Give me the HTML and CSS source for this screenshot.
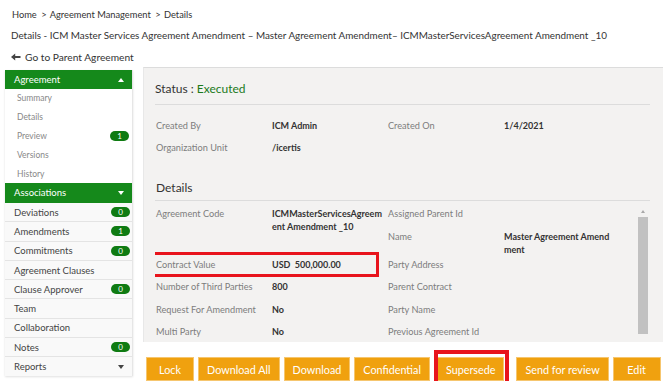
FILE: index.html
```html
<!DOCTYPE html>
<html lang="en">
<head>
    <meta charset="UTF-8">
    <meta name="viewport" content="width=device-width, initial-scale=1.0">
    <title>Agreement Details</title>
    <link rel="stylesheet" href="styles.css">
</head>
<body>

    <div class="breadcrumb">Home <span class="sep">&gt;</span> Agreement Management <span class="sep">&gt;</span> Details</div>
    <h1 class="page-title">Details - ICM Master Services Agreement Amendment – Master Agreement Amendment– ICMMasterServicesAgreement Amendment _10</h1>
    <a class="back-link" href="#">
        <svg width="10" height="8" viewBox="0 0 10 8"><path d="M0 4 L4.2 0.4 L4.2 3 L9.5 3 L9.5 5 L4.2 5 L4.2 7.6 Z" fill="#444"/></svg>
        Go to Parent Agreement
    </a>

    <div class="layout">
        <aside class="sidenav">
            <div class="nav-head">Agreement <span class="caret caret-up"></span></div>
            <ul class="nav-sub">
                <li>Summary</li>
                <li>Details</li>
                <li>Preview <span class="badge">1</span></li>
                <li>Versions</li>
                <li>History</li>
            </ul>
            <div class="nav-head">Associations <span class="caret caret-down"></span></div>
            <ul class="nav-list">
                <li>Deviations <span class="badge">0</span></li>
                <li>Amendments <span class="badge">1</span></li>
                <li>Commitments <span class="badge">0</span></li>
                <li>Agreement Clauses</li>
                <li>Clause Approver <span class="badge">0</span></li>
                <li>Team</li>
                <li>Collaboration</li>
                <li>Notes <span class="badge">0</span></li>
                <li>Reports <span class="caret caret-down dark"></span></li>
            </ul>
        </aside>

        <main class="content">
            <section class="panel">
                <div class="status">Status : <span class="status-value">Executed</span></div>

                <div class="meta-grid">
                    <span class="label">Created By</span>
                    <span class="value">ICM Admin</span>
                    <span class="label">Created On</span>
                    <span class="value">1/4/2021</span>
                    <span class="label">Organization Unit</span>
                    <span class="value">/icertis</span>
                </div>

                <h2 class="section-title">Details</h2>

                <div class="details-body">
                    <div class="details-grid">
                        <span class="label span-2">Agreement Code</span>
                        <span class="value span-2 nowrap">ICMMasterServicesAgreem<br>ent Amendment _10</span>
                        <span class="label">Assigned Parent Id</span>
                        <span class="value"></span>
                        <span class="label">Name</span>
                        <span class="value nowrap">Master Agreement Amend<br>ment</span>

                        <div class="highlight"></div>
                        <span class="label">Contract Value</span>
                        <span class="value">USD&nbsp; 500,000.00</span>
                        <span class="label">Party Address</span>
                        <span class="value"></span>

                        <span class="label">Number of Third Parties</span>
                        <span class="value">800</span>
                        <span class="label">Parent Contract</span>
                        <span class="value"></span>

                        <span class="label">Request For Amendment</span>
                        <span class="value">No</span>
                        <span class="label">Party Name</span>
                        <span class="value"></span>

                        <span class="label">Multi Party</span>
                        <span class="value">No</span>
                        <span class="label">Previous Agreement Id</span>
                        <span class="value"></span>
                    </div>
                    <div class="scrollbar">
                        <span class="scroll-arrow"></span>
                        <span class="scroll-thumb"></span>
                    </div>
                </div>
            </section>

            <div class="actions">
                <button class="btn">Lock</button>
                <button class="btn">Download All</button>
                <button class="btn">Download</button>
                <button class="btn">Confidential</button>
                <button class="btn btn-flagged">Supersede</button>
                <button class="btn">Send for review</button>
                <button class="btn">Edit</button>
            </div>
        </main>
    </div>

</body>
</html>
```

FILE: styles.css
```css
body {
    margin: 0;
    font-family: Lato, "Open Sans", sans-serif;
    color: #333;
    background-color: #fff;
}
.breadcrumb {
    margin-top: 4px;
    padding-left: 12px;
    height: 21px;
    line-height: 21px;
    font-size: 9.3px;
    color: #333;
}
.breadcrumb .sep {
    margin: 0 1px 0 2px;
}
.page-title {
    margin: 0;
    padding-left: 11px;
    height: 21px;
    line-height: 21px;
    font-size: 9.9px;
    font-weight: normal;
    color: #333;
    white-space: nowrap;
}
.back-link {
    display: flex;
    align-items: center;
    gap: 4px;
    padding-left: 11px;
    height: 21px;
    font-size: 10.2px;
    color: #333;
    text-decoration: none;
}

.layout {
    display: flex;
    align-items: flex-start;
}

/* left navigation */
.sidenav {
    width: 127px;
    margin: 3px 0 0 5px;
    border-right: 1px solid #e6e6e6;
    box-shadow: 0 1px 2px rgba(0, 0, 0, 0.12);
}
.nav-head {
    display: flex;
    align-items: center;
    justify-content: space-between;
    height: 19px;
    padding: 0 8px 0 9px;
    background-color: #15891b;
    color: #fff;
    font-size: 9.5px;
}
.nav-head + .nav-sub + .nav-head {
    height: 20px;
}
.nav-sub, .nav-list {
    list-style: none;
    margin: 0;
    padding: 0;
}
.nav-sub li {
    display: flex;
    align-items: center;
    justify-content: space-between;
    height: 18.8px;
    padding: 0 3px 0 12px;
    font-size: 8.5px;
    color: #888;
    background-color: #fff;
}
.nav-list li {
    display: flex;
    align-items: center;
    justify-content: space-between;
    height: 18.3px;
    padding: 0 2px 0 9px;
    border-bottom: 1px solid #e4e4e4;
    font-size: 9.5px;
    color: #444;
    background-color: #f9f9f9;
}
.nav-list li:last-child {
    border-bottom: none;
}
.badge {
    display: inline-block;
    width: 19px;
    height: 10px;
    line-height: 10px;
    border-radius: 5px;
    background-color: #0f7b12;
    color: #fff;
    font-size: 8px;
    text-align: center;
}
.caret {
    display: inline-block;
    width: 0;
    height: 0;
    border-left: 3px solid transparent;
    border-right: 3px solid transparent;
}
.caret-up {
    border-bottom: 4px solid #fff;
}
.caret-down {
    border-top: 4px solid #fff;
}
.caret-down.dark {
    border-top-color: #444;
    margin-right: 6px;
}

/* main panel */
.content {
    width: 520px;
    margin-left: 10px;
}
.panel {
    border-top: 1px solid #dcdcdc;
    border-left: 1px solid #e8e8e8;
    background-color: #f3f2f1;
    padding: 0 13px 0 11px;
}
.status {
    padding: 11px 0 5px;
    line-height: 20px;
    font-size: 12px;
    color: #333;
    border-bottom: 1px solid #dcdcdc;
}
.status-value {
    color: #1b7a1b;
}
.meta-grid {
    display: grid;
    grid-template-columns: 116px 116px 116px 116px;
    grid-auto-rows: 22px;
    align-items: center;
    padding: 9px 0 0 1px;
}
.label {
    font-size: 9.2px;
    color: #7d7d7d;
}
.value {
    font-size: 9px;
    font-weight: bold;
    color: #333;
}
.nowrap {
    white-space: nowrap;
}
.section-title {
    margin: 20px 0 0;
    padding: 0 0 2px 1px;
    line-height: 20px;
    font-size: 12px;
    font-weight: normal;
    color: #333;
    border-bottom: 1px solid #dcdcdc;
}
.details-body {
    display: flex;
    height: 141px;
    overflow: hidden;
}
.details-grid {
    flex: 1;
    display: grid;
    grid-template-columns: 116px 116px 116px 116px;
    grid-template-rows: 22.5px 28px;
    grid-auto-rows: 22.5px;
    align-content: start;
    padding: 4px 0 0 1px;
}
.details-grid .label,
.details-grid .value {
    padding-top: 2px;
    line-height: 13px;
}
.details-grid .span-2 {
    grid-row: span 2;
}
.highlight {
    grid-row: 3;
    grid-column: 1 / 3;
    align-self: start;
    height: 19px;
    margin: -4px 9px 0 -12px;
    border: 3px solid #e8141c;
    pointer-events: none;
}
.details-grid .highlight + .label {
    grid-row: 3;
    grid-column: 1;
}
.details-grid .highlight + .label + .value {
    grid-row: 3;
    grid-column: 2;
}
.scrollbar {
    display: flex;
    flex-direction: column;
    align-items: center;
    width: 10px;
    margin-right: 2px;
    padding-top: 9px;
}
.scroll-arrow {
    width: 0;
    height: 0;
    border-left: 2.5px solid transparent;
    border-right: 2.5px solid transparent;
    border-bottom: 3px solid #a8a8a8;
}
.scroll-thumb {
    width: 10px;
    height: 117px;
    margin-top: 4px;
    background-color: #c1c1c1;
}

/* action buttons */
.actions {
    display: flex;
    gap: 4px;
    margin: 15px 0 0 3px;
}
.btn {
    flex-shrink: 0;
    height: 24px;
    padding: 0 8px;
    min-width: 48px;
    border: 1px solid #f6c66f;
    background-color: #f0a10f;
    color: #fff;
    font-family: Lato, "Open Sans", sans-serif;
    font-size: 10.8px;
    white-space: nowrap;
}
.btn-flagged {
    position: relative;
    margin: 0 8px 0 3px;
}
.btn-flagged::after {
    content: "";
    position: absolute;
    top: -8px;
    right: -6px;
    bottom: -7px;
    left: -4px;
    border: 4px solid #e8141c;
    pointer-events: none;
}
```
